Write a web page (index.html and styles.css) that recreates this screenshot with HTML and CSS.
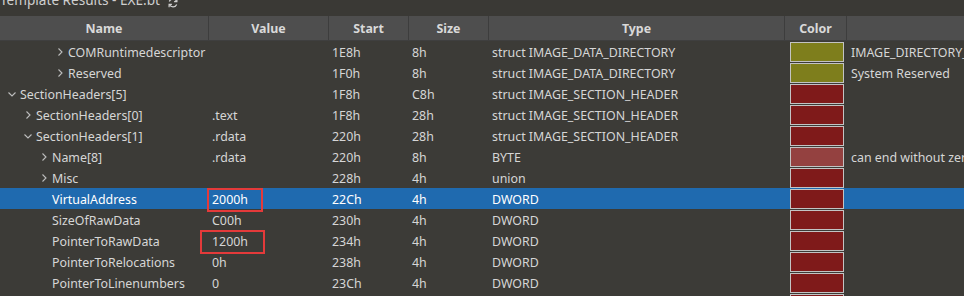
FILE: index.html
```html
<!DOCTYPE html>
<html>
<head>
<meta charset="utf-8">
<link rel="stylesheet" href="styles.css">
</head>
<body>
<div class="panel">
  <div class="titlebar">
    <span class="title">Template Results - EXE.bt</span>
    <svg class="refresh" width="12" height="12" viewBox="0 0 12 12"><path d="M9.5 4.2A4 4 0 0 0 2.3 4.5M2.5 7.8a4 4 0 0 0 7.2-.3" fill="none" stroke="#cfcfcf" stroke-width="1.2"/><path d="M9.9 1.8v2.8H7.1M2.1 10.2V7.4h2.8" fill="none" stroke="#cfcfcf" stroke-width="1.2"/></svg>
  </div>
  <div class="row head">
    <div class="hc">Name</div><div class="hc">Value</div><div class="hc">Start</div><div class="hc">Size</div><div class="hc">Type</div><div class="hc">Color</div><div class="hc last"></div>
  </div>
  <div class="body">
    <div class="row">
      <div class="name lv3"><svg class="chev" viewBox="0 0 8 8"><path d="M2.5 0.5L6 4L2.5 7.5"/></svg>COMRuntimedescriptor</div>
      <div class="val"></div><div class="c">1E8h</div><div class="c">8h</div><div class="c">struct IMAGE_DATA_DIRECTORY</div>
      <div class="col"><span class="sw olive"></span></div><div class="desc">IMAGE_DIRECTORY_ENTRY_COM_DESCRIPTOR</div>
    </div>
    <div class="row">
      <div class="name lv3"><svg class="chev" viewBox="0 0 8 8"><path d="M2.5 0.5L6 4L2.5 7.5"/></svg>Reserved</div>
      <div class="val"></div><div class="c">1F0h</div><div class="c">8h</div><div class="c">struct IMAGE_DATA_DIRECTORY</div>
      <div class="col"><span class="sw olive"></span></div><div class="desc">System Reserved</div>
    </div>
    <div class="row">
      <div class="name lv0"><svg class="chev" viewBox="0 0 8 8"><path d="M0.5 2.5L4 6L7.5 2.5"/></svg>SectionHeaders[5]</div>
      <div class="val"></div><div class="c">1F8h</div><div class="c">C8h</div><div class="c">struct IMAGE_SECTION_HEADER</div>
      <div class="col"><span class="sw red"></span></div><div class="desc"></div>
    </div>
    <div class="row">
      <div class="name lv1"><svg class="chev" viewBox="0 0 8 8"><path d="M2.5 0.5L6 4L2.5 7.5"/></svg>SectionHeaders[0]</div>
      <div class="val">.text</div><div class="c">1F8h</div><div class="c">28h</div><div class="c">struct IMAGE_SECTION_HEADER</div>
      <div class="col"><span class="sw red"></span></div><div class="desc"></div>
    </div>
    <div class="row">
      <div class="name lv1"><svg class="chev" viewBox="0 0 8 8"><path d="M0.5 2.5L4 6L7.5 2.5"/></svg>SectionHeaders[1]</div>
      <div class="val">.rdata</div><div class="c">220h</div><div class="c">28h</div><div class="c">struct IMAGE_SECTION_HEADER</div>
      <div class="col"><span class="sw red"></span></div><div class="desc"></div>
    </div>
    <div class="row">
      <div class="name lv2"><svg class="chev" viewBox="0 0 8 8"><path d="M2.5 0.5L6 4L2.5 7.5"/></svg>Name[8]</div>
      <div class="val">.rdata</div><div class="c">220h</div><div class="c">8h</div><div class="c">BYTE</div>
      <div class="col"><span class="sw pink"></span></div><div class="desc">can end without zero</div>
    </div>
    <div class="row">
      <div class="name lv2"><svg class="chev" viewBox="0 0 8 8"><path d="M2.5 0.5L6 4L2.5 7.5"/></svg>Misc</div>
      <div class="val"></div><div class="c">228h</div><div class="c">4h</div><div class="c">union</div>
      <div class="col"><span class="sw red"></span></div><div class="desc"></div>
    </div>
    <div class="row sel">
      <div class="name lv2 leaf">VirtualAddress</div>
      <div class="val"><span class="mark m1">2000h</span></div><div class="c">22Ch</div><div class="c">4h</div><div class="c">DWORD</div>
      <div class="col"><span class="sw red"></span></div><div class="desc"></div>
    </div>
    <div class="row">
      <div class="name lv2 leaf">SizeOfRawData</div>
      <div class="val">C00h</div><div class="c">230h</div><div class="c">4h</div><div class="c">DWORD</div>
      <div class="col"><span class="sw red"></span></div><div class="desc"></div>
    </div>
    <div class="row">
      <div class="name lv2 leaf">PointerToRawData</div>
      <div class="val"><span class="mark m2">1200h</span></div><div class="c">234h</div><div class="c">4h</div><div class="c">DWORD</div>
      <div class="col"><span class="sw red"></span></div><div class="desc"></div>
    </div>
    <div class="row">
      <div class="name lv2 leaf">PointerToRelocations</div>
      <div class="val">0h</div><div class="c">238h</div><div class="c">4h</div><div class="c">DWORD</div>
      <div class="col"><span class="sw red"></span></div><div class="desc"></div>
    </div>
    <div class="row">
      <div class="name lv2 leaf">PointerToLinenumbers</div>
      <div class="val">0</div><div class="c">23Ch</div><div class="c">4h</div><div class="c">DWORD</div>
      <div class="col"><span class="sw red"></span></div><div class="desc"></div>
    </div>
    <div class="row">
      <div class="name lv2 leaf">NumberOfRelocations</div>
      <div class="val">0</div><div class="c">240h</div><div class="c">2h</div><div class="c">WORD</div>
      <div class="col"><span class="sw red"></span></div><div class="desc"></div>
    </div>
  </div>
</div>
</body>
</html>
```
FILE: styles.css
```css
* { box-sizing: border-box; }
html, body { margin: 0; padding: 0; }
body {
  background: #3c3b37;
  font-family: "Noto Sans", "Open Sans", sans-serif;
  font-size: 12.4px;
  color: #d6d6d6;
  width: 964px;
  height: 296px;
  overflow: hidden;
}
.panel { display: flex; flex-direction: column; }
.titlebar {
  height: 16px;
  background: #3a3935;
  display: flex;
  align-items: flex-start;
  gap: 7px;
  overflow: hidden;
}
.title {
  margin-top: -10px;
  line-height: 20px;
  font-size: 13.6px;
  color: #cfcfcf;
  white-space: nowrap;
}
.refresh { margin-top: -3px; flex: none; }
.row {
  display: grid;
  grid-template-columns: 209px 120px 80px 80px 296px 62px 117px;
  height: 21px;
  align-items: center;
  white-space: nowrap;
}
.head {
  height: 25px;
  background: #4e4e4e;
  border-bottom: 1px solid #3f3f3f;
  font-weight: bold;
  color: #d9d9d9;
}
.hc {
  height: 100%;
  display: flex;
  align-items: center;
  justify-content: center;
  border-right: 1px solid #3d3d3d;
  padding-top: 1px;
}
.hc.last { border-right: none; }
.body { display: flex; flex-direction: column; }
.name { display: flex; align-items: center; overflow: hidden; padding-top: 2px; }
.chev {
  width: 8px; height: 8px;
  margin-right: 4px;
  margin-top: -1px;
  flex: none;
  fill: none;
  stroke: #bdbdbd;
  stroke-width: 1.1;
}
.lv0 { padding-left: 8px; }
.lv1 { padding-left: 24px; }
.lv2 { padding-left: 40px; }
.lv3 { padding-left: 56px; }
.leaf { padding-left: 52px; }
.val { padding: 2px 0 0 3px; }
.c { padding: 2px 0 0 3px; overflow: hidden; }
.col { height: 100%; padding: 1px 0 0 5px; }
.sw {
  display: block;
  width: 54px;
  height: 20px;
  border: 1px solid #c3c3c3;
}
.olive { background: #7e7e1c; }
.red { background: #7f1a1a; }
.pink { background: #944140; }
.desc { padding: 2px 0 0 4px; overflow: hidden; }
.sel { background: #1f6aaf; color: #ffffff; }
.sel .chev { stroke: #ffffff; }
.mark { position: relative; }
.mark::after {
  content: "";
  position: absolute;
  border: 2px solid #e43a3a;
}
.m1::after { left: -5px; right: -15px; top: -3px; bottom: -4px; }
.m2::after { left: -12px; right: -17px; top: -3px; bottom: -4px; }
```
